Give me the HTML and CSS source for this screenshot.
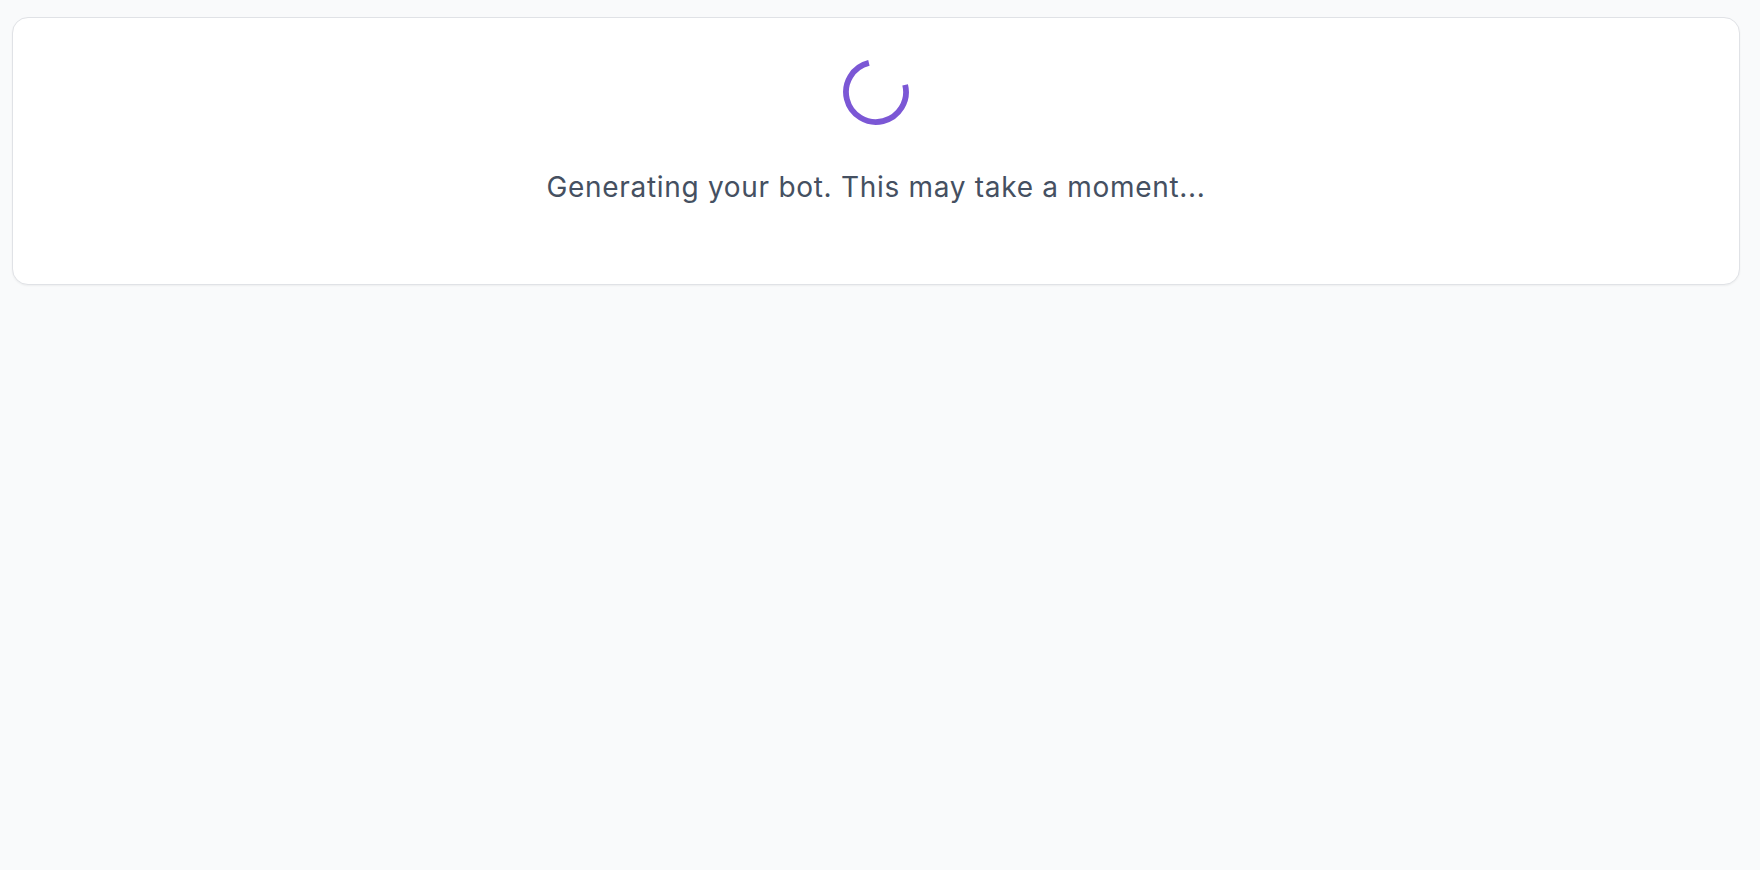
FILE: index.html
```html
<!DOCTYPE html>
<html lang="en">
<head>
<meta charset="utf-8">
<title>Generating</title>
<link rel="stylesheet" href="styles.css">
</head>
<body>
<main class="page">
  <section class="card">
    <svg class="spinner" width="66" height="66" viewBox="0 0 66 66" aria-hidden="true">
      <path d="M25.9 3.85 A30 30 0 1 0 62.15 25.9" fill="none" stroke="#7b57d5" stroke-width="5.8"/>
    </svg>
    <p class="message">Generating your bot. This may take a moment...</p>
  </section>
</main>
</body>
</html>
```
FILE: styles.css
```css
html, body {
  margin: 0;
  padding: 0;
  background: #f9fafb;
  height: 100%;
}
body {
  font-family: Inter, "Noto Sans", sans-serif;
}
.page {
  padding: 17px 20px 0 12px;
}
.card {
  background: #ffffff;
  border: 1px solid #e0e2e6;
  border-radius: 16px;
  box-shadow: 0 1px 2px rgba(0, 0, 0, 0.05);
  height: 268px;
  box-sizing: border-box;
  display: flex;
  flex-direction: column;
  align-items: center;
  padding-top: 41px;
}
.spinner {
  display: block;
}
.message {
  margin: 44px 0 0;
  font-size: 28px;
  line-height: 36px;
  letter-spacing: 0.7px;
  color: #455061;
  font-weight: 400;
}
```
